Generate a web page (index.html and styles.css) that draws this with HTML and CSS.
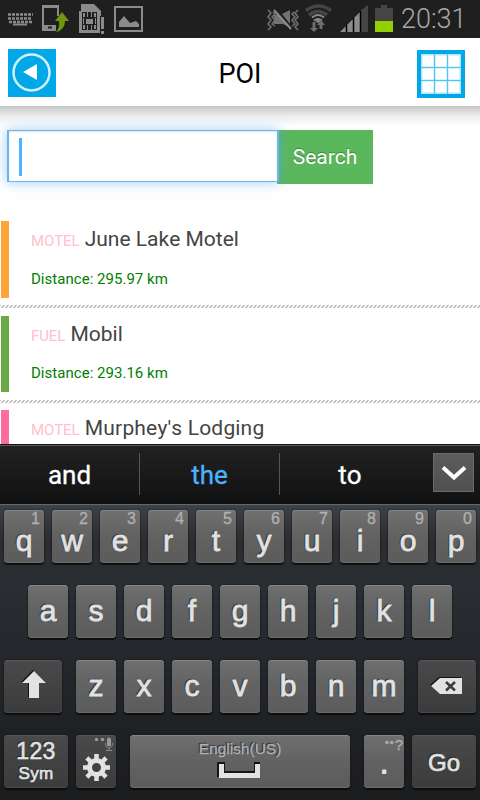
FILE: index.html
```html
<!DOCTYPE html>
<html lang="en">
  <head>
    <meta charset="UTF-8" />
    <meta name="viewport" content="width=device-width, initial-scale=1.0" />
    <title>POI</title>
    <link rel="stylesheet" href="styles.css">
  </head>
  <body>
    <div class="status-bar">
      <div class="status-left">
        <svg width="26" height="38" viewBox="0 0 26 38">
          <path d="M0 14.500h25M0 18.500h24M1 22h24" stroke="#8b8b8b" stroke-width="2.500" stroke-dasharray="3 1" />
          <path d="M5 24.500h14" stroke="#8b8b8b" stroke-width="2" />
        </svg>
        <svg width="29" height="38" viewBox="0 0 29 38">
          <path d="M1 5h17v11h-2V8H3v17h12v6H1z" fill="#8b8b8b" />
          <path d="M7 27.500h4" stroke="#1f1f1f" stroke-width="2" />
          <path d="M21 12l7 9h-4q0 9-9 11 4-4 3-11h-4z" fill="#6f970e" />
        </svg>
        <svg width="27" height="38" viewBox="0 0 27 38">
          <path d="M2 4h13l7 7v22H0V11h2z" fill="#8b8b8b" />
          <path d="M3 12h15v18H3z" fill="#1f1f1f" />
          <path d="M4 13h2v4H4zM8 12h1v5H8zM12 12h1v5h-1zM15 13h2v4h-2zM4 25h2v4H4zM8 25h1v5H8zM12 25h1v5h-1zM15 25h2v4h-2zM4 18h1v6H4zM16 18h1v6h-1z" fill="#8b8b8b" />
          <rect x="7" y="19" width="7" height="5" fill="#8b8b8b" />
          <path d="M21 16h5v18h-5z" fill="#1f1f1f" />
          <path d="M22 17h3v12h-3zM22 31h3v3h-3z" fill="#8b8b8b" />
        </svg>
        <svg width="29" height="38" viewBox="0 0 29 38">
          <rect x="1" y="7" width="27" height="24" fill="none" stroke="#8b8b8b" stroke-width="2" />
          <path d="M5 27v-5l5-6 6 7 3-1 3-1 3 3v3z" fill="#8b8b8b" />
        </svg>
      </div>
      <div class="status-right">
        <svg width="33" height="38" viewBox="0 0 33 38">
          <path d="M1 10l3 3-3 4 3 3-3 4 3 3-3 3M6 12l2 2-3 3 3 3-3 4 3 2M27 12l-2 2 3 3-3 3 3 4-3 2M31 10l-3 3 3 4-3 3 3 4-3 3 3 3" fill="none" stroke="#727272" stroke-width="1.500" />
          <path d="M7 15l5 0 12 13-8-4H7zM15 14l8-4v14z" fill="#727272" />
          <path d="M7 10l17 19" stroke="#8b8b8b" stroke-width="2" />
        </svg>
        <svg width="27" height="38" viewBox="0 0 27 38">
          <path d="M1 10.500q12.500-9 25 0M4 15q9-7 18 0" fill="none" stroke="#454545" stroke-width="3.500" />
          <path d="M7 17.500q6-5 12 0M9 20.500q4-3 8 0" fill="none" stroke="#8b8b8b" stroke-width="2" />
          <path d="M13 23l-3-2q3-2 6 0z" fill="#8b8b8b" />
          <path d="M9 22v8M16 29v-7" stroke="#6d6d6d" stroke-width="3" />
          <path d="M5 28h8l-4 4zM12 25h8l-4-5z" fill="#6d6d6d" />
        </svg>
        <svg width="29" height="38" viewBox="0 0 29 38">
          <path d="M0 32L22 10v22z" fill="#8b8b8b" />
          <path d="M20 11l8-6v27h-8z" fill="#454545" />
          <path d="M6.500 25v7M13.500 18v14M20.500 11v21" stroke="#000" stroke-width="1.500" />
        </svg>
        <svg width="18" height="38" viewBox="0 0 18 38">
          <path d="M0 8h6V5h6v3h6v13H0z" fill="#454545" />
          <path d="M0 21h18v11H0z" fill="#92d000" />
        </svg>
        <span class="clock">20:31</span>
      </div>
    </div>

    <header>
      <svg class="back" width="48" height="48" viewBox="0 0 48 48">
        <circle cx="23.500" cy="23.500" r="18" fill="none" stroke="#d4f0fc" stroke-width="2.500" />
        <path d="M15 23l14-8v16z" fill="#fff" />
      </svg>
      <h1>POI</h1>
      <svg class="grid" width="48" height="48" viewBox="0 0 48 48">
        <rect x="4" y="4" width="40" height="40" fill="#b3e5fa" />
        <path d="M5.500 5.500h11v11h-11zM18.500 5.500h11v11h-11zM31.500 5.500h11v11h-11zM5.500 18.500h11v11h-11zM18.500 18.500h11v11h-11zM31.500 18.500h11v11h-11zM5.500 31.500h11v11h-11zM18.500 31.500h11v11h-11zM31.500 31.500h11v11h-11z" fill="#fff" />
        <path d="M17.500 4v40M30.500 4v40M4 17.500h40M4 30.500h40" fill="none" stroke="#52c4f1" />
      </svg>
    </header>

    <main>
      <div class="search">
        <div class="search-input"><span class="caret"></span></div>
        <button>Search</button>
      </div>
      <ul class="poi-list">
        <li>
          <div class="poi orange">
            <h2><small>MOTEL</small> June Lake Motel</h2>
            <p>Distance: 295.97 km</p>
          </div>
        </li>
        <li>
          <div class="poi green">
            <h2><small>FUEL</small> Mobil</h2>
            <p>Distance: 293.16 km</p>
          </div>
        </li>
        <li>
          <div class="poi pink">
            <h2><small>MOTEL</small> Murphey's Lodging</h2>
          </div>
        </li>
      </ul>
    </main>

    <div class="suggestions">
      <span>and</span>
      <span class="active">the</span>
      <span>to</span>
      <div class="collapse">
        <svg width="40" height="38" viewBox="0 0 40 38">
          <path d="M9 13.500l11 10 11-10" fill="none" stroke="#fff" stroke-width="4" />
        </svg>
      </div>
    </div>

    <div class="keyboard">
      <div class="row">
        <div class="key"><sup>1</sup>q</div>
        <div class="key"><sup>2</sup>w</div>
        <div class="key"><sup>3</sup>e</div>
        <div class="key"><sup>4</sup>r</div>
        <div class="key"><sup>5</sup>t</div>
        <div class="key"><sup>6</sup>y</div>
        <div class="key"><sup>7</sup>u</div>
        <div class="key"><sup>8</sup>i</div>
        <div class="key"><sup>9</sup>o</div>
        <div class="key"><sup>0</sup>p</div>
      </div>
      <div class="row middle">
        <div class="key">a</div>
        <div class="key">s</div>
        <div class="key">d</div>
        <div class="key">f</div>
        <div class="key">g</div>
        <div class="key">h</div>
        <div class="key">j</div>
        <div class="key">k</div>
        <div class="key">l</div>
      </div>
      <div class="row">
        <div class="key dark shift">
          <svg width="58" height="53" viewBox="0 0 58 53">
            <path d="M29 10L17 22h7v15h10V22h7z" fill="#111" />
            <path d="M30 11L18 23h7v15h10V23h7z" fill="#e2e2e2" />
          </svg>
        </div>
        <div class="key">z</div>
        <div class="key">x</div>
        <div class="key">c</div>
        <div class="key">v</div>
        <div class="key">b</div>
        <div class="key">n</div>
        <div class="key">m</div>
        <div class="key dark backspace">
          <svg width="58" height="53" viewBox="0 0 58 53">
            <path d="M12 25l9-8h22v16H21z" fill="#111" />
            <path d="M13 26l9-8h22v16H22z" fill="#e2e2e2" />
            <path d="M28 22l9 8.500M37 22l-9 8.500" stroke="#3b3b3b" stroke-width="2.500" />
          </svg>
        </div>
      </div>
      <div class="row">
        <div class="key dark sym"><span>123</span><span class="small">Sym</span></div>
        <div class="key dark gear">
          <svg width="40" height="53" viewBox="0 0 40 53">
            <g fill="#999">
              <circle cx="20.500" cy="4.500" r="1.700" />
              <circle cx="26.500" cy="4.500" r="1.700" />
              <rect x="31" y="2.500" width="4" height="9" rx="2" />
            </g>
            <path d="M29.500 8q0 5 3.500 5t3.500-5M33 13v2M30 15.500h6" fill="none" stroke="#888" />
            <g transform="translate(20.500 32.500)">
              <circle r="7" fill="none" stroke="#e2e2e2" stroke-width="5" />
              <path d="M0-13.500V-8M0 13.500V8M-13.500 0H-8M13.500 0H8M-9.600-9.600L-6-6M9.600 9.600L6 6M-9.600 9.600L-6 6M9.600-9.600L6-6" stroke="#e2e2e2" stroke-width="4.500" />
            </g>
          </svg>
        </div>
        <div class="key space">
          <span>English(US)</span>
          <svg width="46" height="18" viewBox="0 0 46 18">
            <path d="M1 15V1h6v9h31V1h4v2" fill="none" stroke="#151515" stroke-width="2" />
            <path d="M2 2h5v9h31V2h5v14H2z" fill="#e2e2e2" />
          </svg>
        </div>
        <div class="key dot"><sup><b>••</b>?</sup>.</div>
        <div class="key dark go">Go</div>
      </div>
    </div>
  </body>
</html>
```
FILE: styles.css
```css
* {
  box-sizing: border-box;
}

body {
  margin: 0;
  width: 480px;
  height: 800px;
  overflow: hidden;
  display: flex;
  flex-direction: column;
  font-family: Roboto, sans-serif;
  font-kerning: none;
  background: #fff;
  color: #444;
}

svg {
  display: block;
}

/* Status bar */
.status-bar {
  flex: none;
  display: flex;
  justify-content: space-between;
  height: 38px;
  padding: 0 14px 0 8px;
  background: #1f1f1f;
}

.status-left {
  display: flex;
  gap: 7px;
}

.status-left svg:nth-child(3) {
  margin-left: 2px;
}

.status-left svg:nth-child(4) {
  margin-left: 1px;
}

.status-right {
  display: flex;
  gap: 7px;
}

.status-right svg:nth-child(1) {
  margin-right: -2px;
}

.status-right svg:nth-child(3) {
  margin-left: 1px;
  margin-right: -1px;
}

.clock {
  width: 66px;
  padding-left: 1px;
  font-size: 27px;
  font-weight: 300;
  line-height: 39px;
  color: #a8a8a8;
  white-space: nowrap;
}

/* Header */
header {
  flex: none;
  position: relative;
  display: flex;
  justify-content: space-between;
  height: 68px;
  padding: 11px 15px 0 8px;
  background: #fff;
}

header::after {
  content: "";
  position: absolute;
  top: 68px;
  left: 0;
  width: 100%;
  height: 20px;
  background: linear-gradient(#c6c6c6, #dadada 25%, #efefef 55%, #fff);
}

header svg {
  background: #00a8e8;
}

.grid {
  margin-top: 1px;
}

h1 {
  margin: 0;
  padding-left: 7px;
  font-size: 27px;
  font-weight: 400;
  line-height: 51px;
  color: #000;
}

main {
  flex: none;
  height: 338px;
  overflow: hidden;
}

/* Search */
.search {
  position: relative;
  display: flex;
  height: 54px;
  margin: 24px 0 0 7px;
}

.search-input {
  position: relative;
  z-index: 1;
  width: 272px;
  height: 52px;
  padding: 7px 10px;
  background: #fff;
  border: solid #6cb5ee;
  border-width: 1px 2px;
  box-shadow: 0 0 12px rgba(82, 168, 236, 0.6), inset 0 1px 2px rgba(0, 0, 0, 0.12);
}

.caret {
  display: block;
  width: 3px;
  height: 38px;
  background: #4db2ff;
}

.search button {
  width: 96px;
  margin-left: -2px;
  padding: 0;
  border: none;
  background: #5bb75b;
  color: #fff;
  font-family: inherit;
  font-size: 21px;
  text-shadow: 0 -1px 1px rgba(0, 0, 0, 0.3);
}

/* List */
.poi-list {
  margin: 37px 0 0;
  padding: 0;
  list-style: none;
}

.poi-list li {
  height: 94.5px;
}

.poi-list li::after {
  content: "";
  display: block;
  height: 3px;
  margin-top: 7px;
  background: repeating-linear-gradient(135deg, #bbb 0 1.4px, #fff 1.4px 2.828px);
}

.poi-list li:nth-child(2)::after {
  margin-top: 8px;
}

.poi {
  height: 77px;
  margin-left: 1px;
  padding-left: 22px;
  border-left: 8px solid;
}

.orange {
  border-color: #ffa439;
}

.green {
  height: 76px;
  border-color: #6aaa46;
}

.pink {
  border-color: #ff6b9b;
}

.poi h2 {
  margin: 0;
  font-size: 21px;
  font-weight: 400;
  line-height: 36px;
  color: #444;
}

.pink h2 {
  letter-spacing: 0.17px;
}

.poi small {
  font-size: 15px;
  letter-spacing: -0.1px;
  color: #ffc0cb;
}

.poi p {
  margin: 10px 0 0;
  font-size: 15px;
  line-height: 20px;
  letter-spacing: 0.03px;
  color: #008000;
}

.green p {
  margin-top: 9px;
}

/* Word suggestions */
.suggestions {
  flex: none;
  display: flex;
  height: 60px;
  padding-top: 8px;
  border-top: 1px solid #111;
  box-shadow: inset 0 1px #5c5c5c;
  background: linear-gradient(#222, #111);
  font-size: 26px;
  color: #fff;
}

.suggestions span {
  width: 140px;
  height: 42px;
  line-height: 45px;
  text-align: center;
  border-right: 1px solid #555;
  -webkit-text-stroke: 0.3px;
}

.suggestions span:nth-child(3) {
  border: none;
}

.suggestions .active {
  color: #4db2ff;
}

.collapse {
  width: 41px;
  height: 39px;
  margin-left: 13px;
  background: linear-gradient(#5c5c5c, #505050);
  border: 1px solid #6b6b6b;
}

/* Keyboard */
.keyboard {
  flex: none;
  display: flex;
  flex-direction: column;
  gap: 22px;
  height: 296px;
  padding: 5px 4px 0;
  border-top: 1px solid #62686b;
  background: linear-gradient(#3d4246, #2a2e33 12%, #2a2e33 25%, #1a1c1e);
  font-family: "Liberation Sans", sans-serif;
}

.row {
  display: flex;
  gap: 8px;
}

.middle {
  padding-left: 24px;
}

.key {
  position: relative;
  width: 40px;
  height: 53px;
  border-radius: 4px;
  background: linear-gradient(#707070, #646464 40%, #5b5b5b);
  box-shadow: inset 0 1px #858585, inset 0 -1px #6c6c6c, 0 2px 1px #0c0d0e, 0 0 2px #151515;
  color: #e2e2e2;
  font-size: 30px;
  line-height: 51px;
  text-align: center;
  -webkit-text-stroke: 0.8px #e2e2e2;
  text-shadow: -1px -1px 1px #222;
}

.row:first-child .key {
  line-height: 61px;
}

.key sup {
  position: absolute;
  top: 0;
  right: 4px;
  font-size: 16px;
  line-height: 18px;
  color: #b0b0b0;
  -webkit-text-stroke: 0.3px #b0b0b0;
  text-shadow: none;
}

.row:first-child .key sup {
  line-height: 18px;
}

.dark {
  background: linear-gradient(#4a4a4a, #3b3b3b);
  box-shadow: inset 0 1px #555, inset 0 -1px #484848, 0 2px 1px #0c0d0e, 0 0 2px #151515;
}

.shift {
  width: 58px;
  margin-right: 6px;
}

.backspace {
  width: 58px;
  margin-left: 6px;
}

.sym {
  width: 64px;
  display: flex;
  flex-direction: column;
  font-size: 23px;
  line-height: 26px;
  padding-top: 3px;
  letter-spacing: 0.3px;
  -webkit-text-stroke: 0.6px #e2e2e2;
}

.sym .small {
  font-size: 17px;
  line-height: 19px;
}

.space {
  width: 220px;
  margin: 0 6px;
  display: flex;
  flex-direction: column;
  align-items: center;
  font-size: 15.5px;
  line-height: 27px;
  color: #b0b0b0;
  -webkit-text-stroke: 0.3px #b0b0b0;
}

.dot {
  font-size: 24px;
  line-height: 59px;
  -webkit-text-stroke: 1.8px #e2e2e2;
}

.dot sup {
  right: 1px;
  font-size: 15px;
  line-height: 15px;
}

.dot b {
  font-size: 11px;
  font-weight: 400;
  vertical-align: 4px;
  letter-spacing: 1px;
}

.go {
  width: 64px;
  font-size: 24px;
  line-height: 55px;
  -webkit-text-stroke: 0.7px #e2e2e2;
}
```
